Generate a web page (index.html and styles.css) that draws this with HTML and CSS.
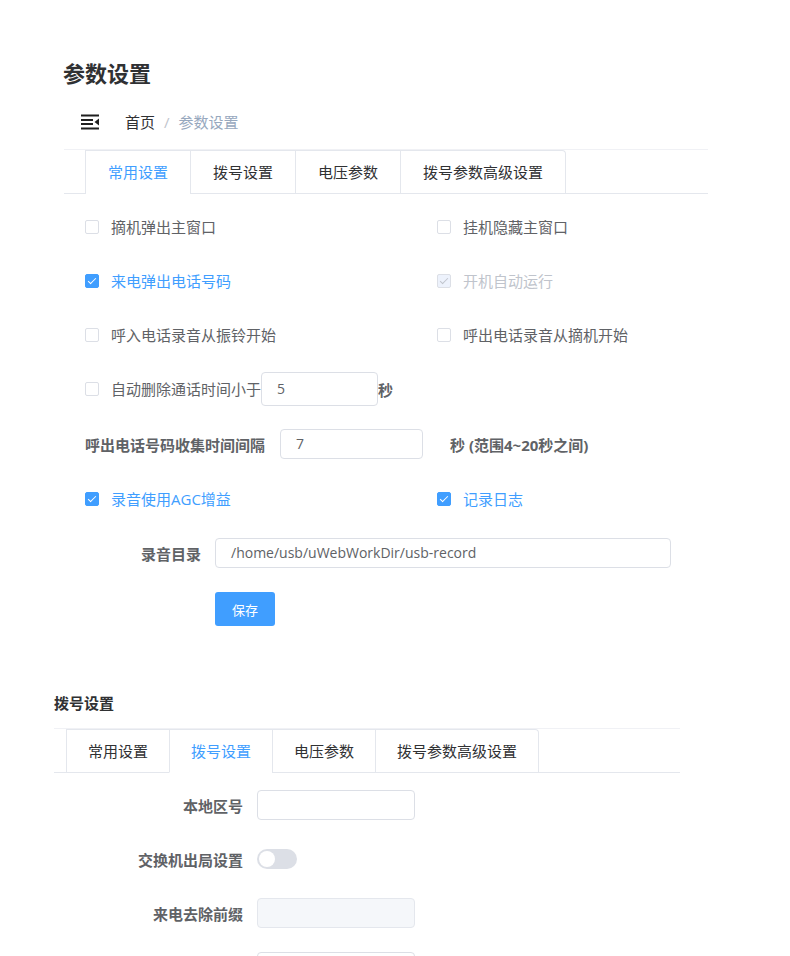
FILE: index.html
```html
<!DOCTYPE html>
<html lang="zh-CN">
<head>
<meta charset="utf-8">
<title>参数设置</title>
<link rel="stylesheet" href="styles.css">
</head>
<body>
<div class="page">
  <section class="panel panel-main">
    <h1 class="page-title">参数设置</h1>
    <div class="breadcrumb-bar">
      <svg class="hamburger" width="18" height="16" viewBox="0 0 18 16" aria-hidden="true">
        <rect x="0" y="0.5" width="18" height="2" fill="#1f1f1f"/>
        <rect x="0" y="5" width="12" height="2" fill="#1f1f1f"/>
        <rect x="0" y="9" width="12" height="2" fill="#1f1f1f"/>
        <rect x="0" y="13.5" width="18" height="2" fill="#1f1f1f"/>
        <polygon points="18,4.5 13.5,8 18,11.5" fill="#1f1f1f"/>
      </svg>
      <nav class="breadcrumb">
        <span class="crumb-home">首页</span>
        <span class="crumb-sep">/</span>
        <span class="crumb-current">参数设置</span>
      </nav>
    </div>
    <div class="tabs">
      <div class="tabs-header">
        <div class="tabs-nav">
          <div class="tab is-active">常用设置</div>
          <div class="tab">拨号设置</div>
          <div class="tab">电压参数</div>
          <div class="tab">拨号参数高级设置</div>
        </div>
      </div>
      <div class="general-form">
        <div class="row row-pair">
          <label class="checkbox"><span class="box"></span><span class="cb-text">摘机弹出主窗口</span></label>
          <label class="checkbox"><span class="box"></span><span class="cb-text">挂机隐藏主窗口</span></label>
        </div>
        <div class="row row-pair">
          <label class="checkbox is-checked"><span class="box"></span><span class="cb-text">来电弹出电话号码</span></label>
          <label class="checkbox is-checked is-disabled"><span class="box"></span><span class="cb-text">开机自动运行</span></label>
        </div>
        <div class="row row-pair">
          <label class="checkbox"><span class="box"></span><span class="cb-text">呼入电话录音从振铃开始</span></label>
          <label class="checkbox"><span class="box"></span><span class="cb-text">呼出电话录音从摘机开始</span></label>
        </div>
        <div class="row">
          <label class="checkbox"><span class="box"></span><span class="cb-text">自动删除通话时间小于</span></label>
          <div class="input input-short"><span class="input-value">5</span></div>
          <span class="unit">秒</span>
        </div>
        <div class="row row-tall">
          <span class="bold-label">呼出电话号码收集时间间隔</span>
          <div class="input input-interval"><span class="input-value">7</span></div>
          <span class="unit unit-range">秒 (范围4~20秒之间)</span>
        </div>
        <div class="row row-pair">
          <label class="checkbox is-checked"><span class="box"></span><span class="cb-text">录音使用AGC增益</span></label>
          <label class="checkbox is-checked"><span class="box"></span><span class="cb-text">记录日志</span></label>
        </div>
        <div class="row">
          <span class="form-label">录音目录</span>
          <div class="input input-path"><span class="input-value">/home/usb/uWebWorkDir/usb-record</span></div>
        </div>
        <div class="actions">
          <button class="btn-primary" type="button">保存</button>
        </div>
      </div>
    </div>
  </section>

  <section class="panel panel-dial">
    <h2 class="section-title">拨号设置</h2>
    <div class="tabs">
      <div class="tabs-header">
        <div class="tabs-nav tabs-nav-dial">
          <div class="tab">常用设置</div>
          <div class="tab is-active">拨号设置</div>
          <div class="tab">电压参数</div>
          <div class="tab">拨号参数高级设置</div>
        </div>
      </div>
      <div class="dial-form">
        <div class="row">
          <span class="form-label dial-label">本地区号</span>
          <div class="input input-dial"></div>
        </div>
        <div class="row">
          <span class="form-label dial-label">交换机出局设置</span>
          <span class="switch"></span>
        </div>
        <div class="row">
          <span class="form-label dial-label">来电去除前缀</span>
          <div class="input input-dial is-disabled"></div>
        </div>
        <div class="row">
          <span class="form-label dial-label"></span>
          <div class="input input-dial"></div>
        </div>
      </div>
    </div>
  </section>
</div>
</body>
</html>
```
FILE: styles.css
```css
html, body {
  margin: 0;
  padding: 0;
  background: #fff;
  overflow: hidden;
}

body {
  font-family: "Open Sans", "Noto Sans CJK SC", sans-serif;
  font-size: 15px;
  color: #606266;
}

.page {
  display: flex;
  flex-direction: column;
}

.panel-main {
  margin-left: 64px;
  width: 644px;
  padding-top: 58px;
}

.page-title {
  margin: 0 0 14px -1px;
  font-size: 22px;
  line-height: 30px;
  font-weight: 700;
  color: #303133;
}

.breadcrumb-bar {
  height: 40px;
  display: flex;
  align-items: center;
  padding-left: 17px;
  margin-bottom: 7px;
}

.hamburger {
  display: block;
  margin-right: 26px;
}

.breadcrumb {
  display: flex;
  align-items: center;
  font-size: 15px;
  line-height: 20px;
}

.crumb-home {
  color: #303133;
}

.crumb-sep {
  color: #c0c4cc;
  margin: 0 9px;
}

.crumb-current {
  color: #97a8be;
}

/* tabs */
.tabs {
  border-top: 1px solid #f0f1f5;
}

.tabs-header {
  display: flex;
  border-bottom: 1px solid #e4e7ed;
}

.tabs-nav {
  display: flex;
  margin-left: 21px;
  margin-bottom: -1px;
  border: 1px solid #e4e7ed;
  border-bottom: none;
  border-radius: 0 4px 0 0;
}

.tab {
  height: 42px;
  line-height: 42px;
  padding: 0 22px;
  font-size: 15px;
  color: #303133;
  border-left: 1px solid #e4e7ed;
  border-bottom: 1px solid transparent;
  white-space: nowrap;
}

.tab:first-child {
  border-left: none;
}

.tab.is-active {
  color: #409eff;
  border-bottom-color: #fff;
}

/* general form */
.general-form {
  padding: 6px 0 0 21px;
}

.row {
  height: 54px;
  display: flex;
  align-items: center;
}

.row-tall {
  height: 56px;
}

.row-pair {
  display: grid;
  grid-template-columns: 352px 1fr;
  align-items: center;
}

.checkbox {
  display: inline-flex;
  align-items: center;
  cursor: pointer;
  white-space: nowrap;
}

.box {
  position: relative;
  width: 14px;
  height: 14px;
  box-sizing: border-box;
  border: 1px solid #dcdfe6;
  border-radius: 2px;
  background: #fff;
  margin-right: 12px;
  flex: none;
}

.cb-text {
  font-size: 15px;
  line-height: 20px;
  color: #606266;
}

.is-checked .box {
  background: #409eff;
  border-color: #409eff;
}

.is-checked .box::after {
  content: "";
  position: absolute;
  left: 4px;
  top: 1px;
  width: 3px;
  height: 7px;
  border: 1px solid #fff;
  border-left: 0;
  border-top: 0;
  transform: rotate(45deg);
}

.is-checked .cb-text {
  color: #409eff;
}

.is-disabled.is-checked .box {
  background: #edf2fc;
  border-color: #dcdfe6;
}

.is-disabled.is-checked .box::after {
  border-color: #c0c4cc;
}

.is-disabled .cb-text {
  color: #c0c4cc;
}

.input {
  box-sizing: border-box;
  height: 30px;
  border: 1px solid #dcdfe6;
  border-radius: 4px;
  background: #fff;
  padding: 0 15px;
  display: flex;
  align-items: center;
  font-size: 14px;
  color: #606266;
  flex: none;
}

.input-value {
  line-height: 20px;
  white-space: nowrap;
}

.input-short {
  width: 117px;
  height: 34px;
}

.input-interval {
  width: 143px;
  margin-left: 15px;
}

.input-path {
  width: 456px;
}

.unit {
  font-weight: 700;
  font-size: 15px;
  color: #606266;
}

.unit-range {
  margin-left: 27px;
}

.bold-label {
  font-weight: 700;
  font-size: 15px;
  color: #606266;
  white-space: nowrap;
}

.form-label {
  width: 116px;
  margin-right: 14px;
  text-align: right;
  font-weight: 700;
  font-size: 15px;
  color: #606266;
  white-space: nowrap;
}

.actions {
  padding: 12px 0 0 130px;
}

.btn-primary {
  display: block;
  width: 60px;
  height: 34px;
  border: none;
  border-radius: 3px;
  background: #409eff;
  color: #fff;
  font-family: "Open Sans", "Noto Sans CJK SC", sans-serif;
  font-size: 13px;
  padding: 0;
}

/* dial panel */
.panel-dial {
  margin-left: 54px;
  width: 626px;
  margin-top: 67px;
}

.section-title {
  margin: 0 0 15px;
  font-size: 15px;
  line-height: 20px;
  font-weight: 700;
  color: #303133;
}

.tabs-nav-dial {
  margin-left: 12px;
}

.tabs-nav-dial .tab {
  padding: 0 21px;
}

.dial-form {
  padding: 5px 0 0 39px;
}

.dial-label {
  width: 150px;
}

.input-dial {
  width: 158px;
}

.input-dial.is-disabled {
  background: #f5f7fa;
  border-color: #e4e7ed;
}

.switch {
  position: relative;
  display: inline-block;
  width: 40px;
  height: 20px;
  border-radius: 10px;
  background: #dcdfe6;
  flex: none;
}

.switch::after {
  content: "";
  position: absolute;
  left: 2px;
  top: 2px;
  width: 16px;
  height: 16px;
  border-radius: 50%;
  background: #fff;
}
```
